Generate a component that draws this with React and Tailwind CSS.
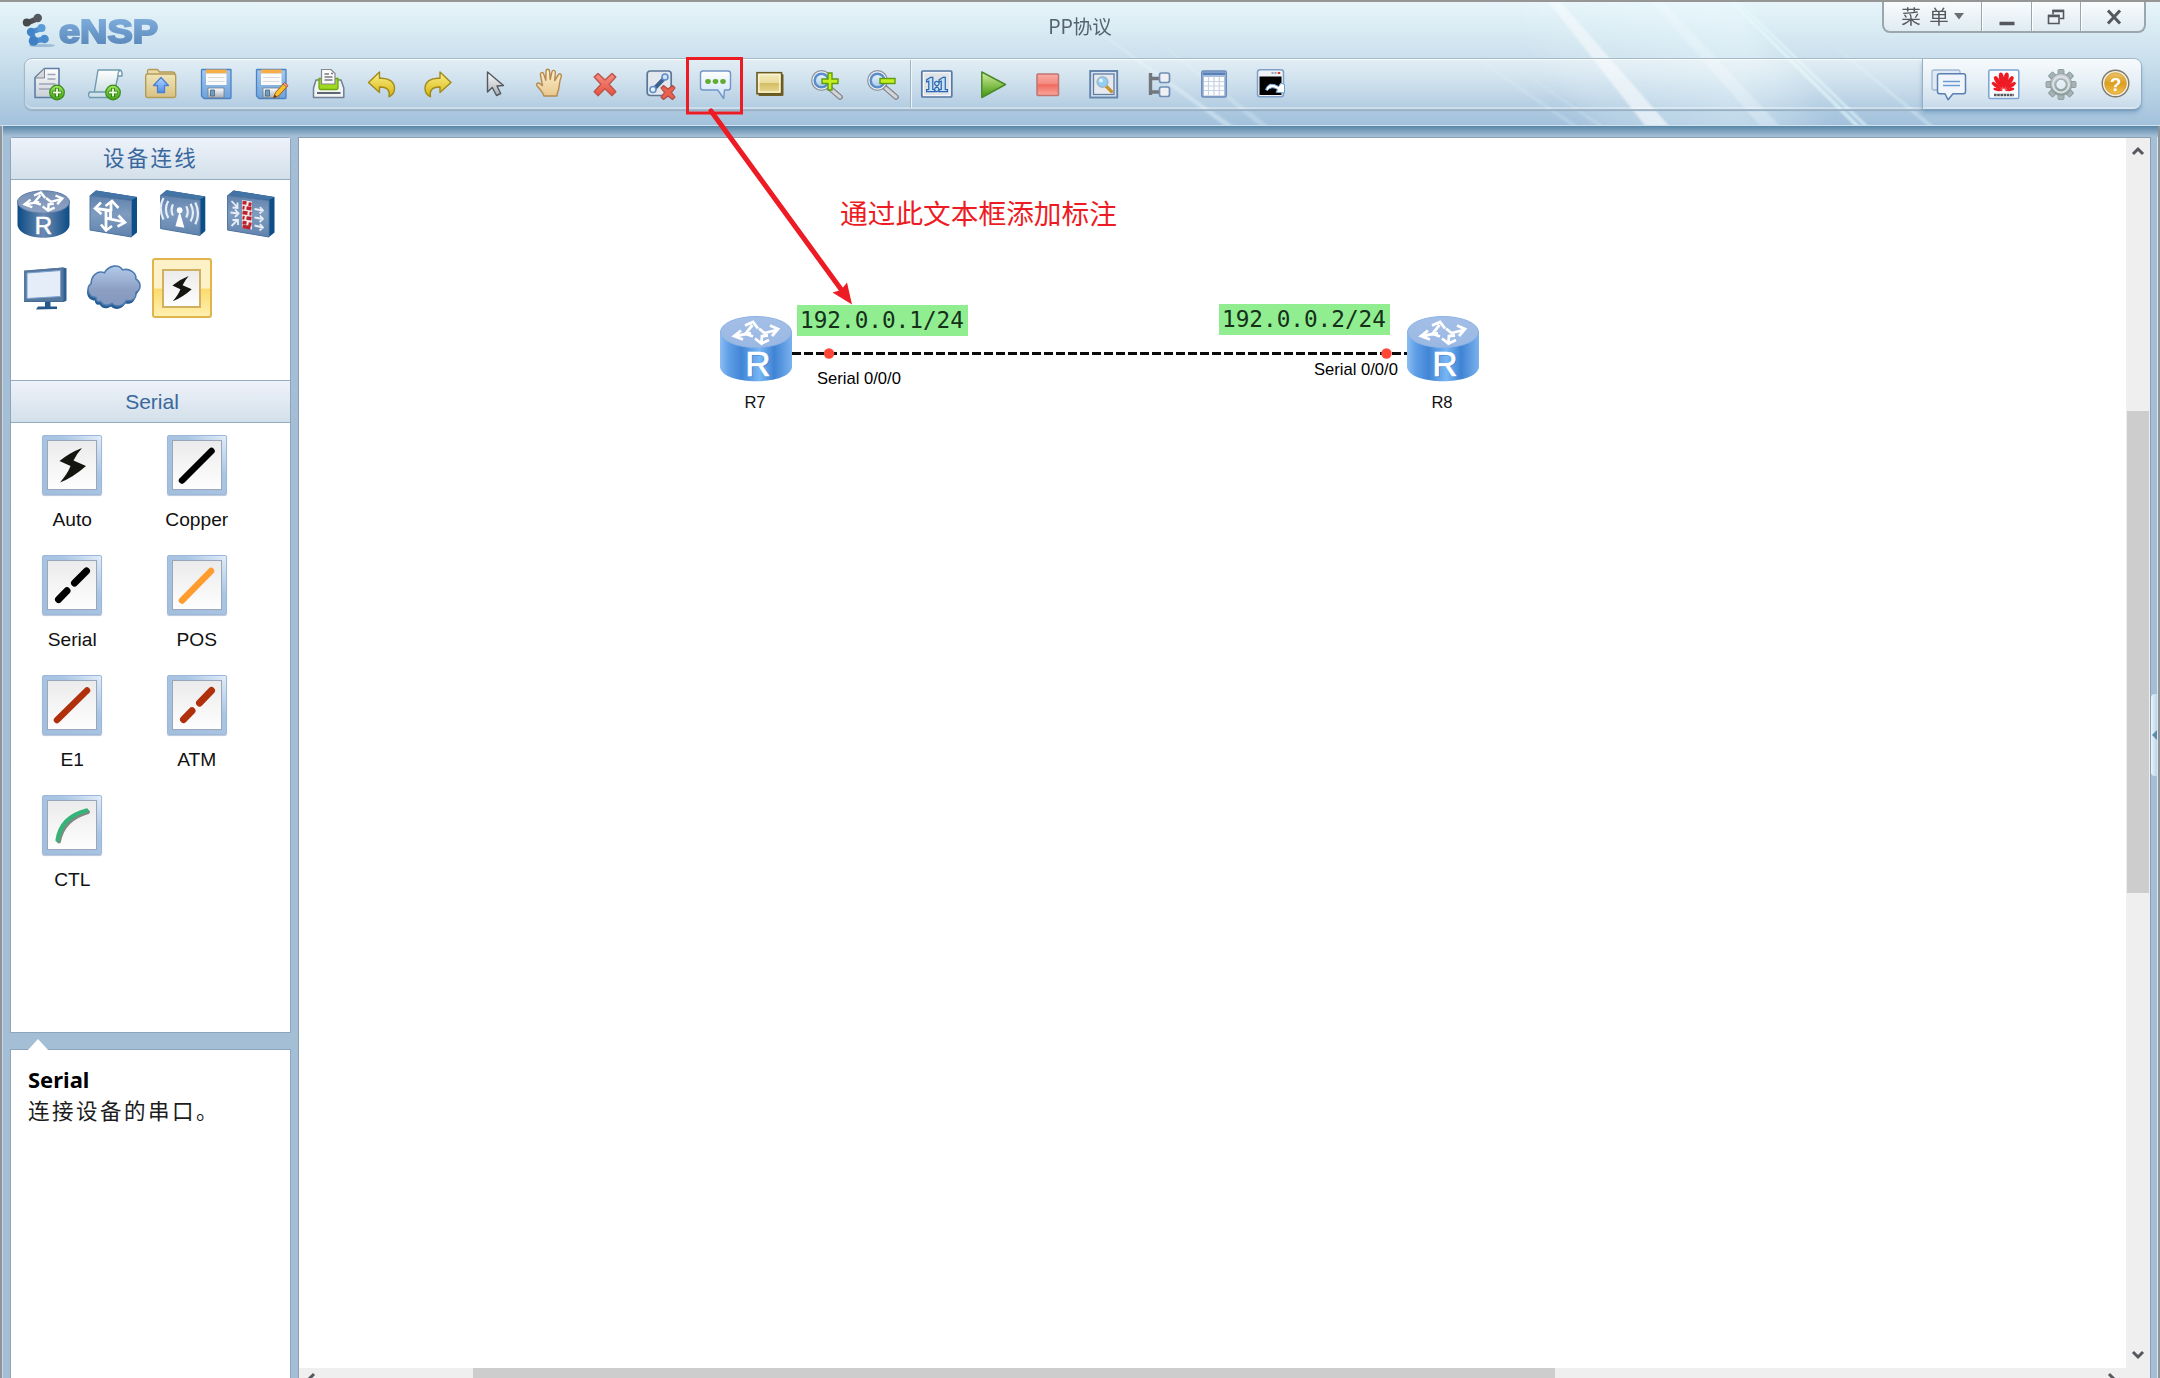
import React from "react";

const SANS = "font-['Liberation_Sans','Noto_Sans_CJK_SC',sans-serif]";
const CJK = "font-['Noto_Sans_CJK_SC',sans-serif]";

function Gradient({ id, stops, horizontal }) {
  return (
    <linearGradient id={id} x1="0" y1="0" x2={horizontal ? 1 : 0} y2={horizontal ? 0 : 1}>
      {stops.map(([o, c], i) => (
        <stop key={i} offset={o} stopColor={c} />
      ))}
    </linearGradient>
  );
}

function Defs() {
  return (
    <svg width="0" height="0" className="absolute">
      <defs>
        <Gradient id="paper" stops={[[0, "#ffffff"], [1, "#c9ced6"]]} />
        <Gradient id="scroll" stops={[[0, "#ffffff"], [1, "#c9dde2"]]} />
        <Gradient id="green" stops={[[0, "#9be860"], [1, "#3fa012"]]} />
        <Gradient id="folder" stops={[[0, "#f0e4b8"], [1, "#d8c282"]]} />
        <Gradient id="blue" stops={[[0, "#b5d8ff"], [1, "#4f8fe8"]]} />
        <Gradient id="floppy" stops={[[0, "#a5c8ec"], [1, "#6fa3da"]]} />
        <Gradient id="metal" stops={[[0, "#ffffff"], [1, "#a8acb4"]]} />
        <Gradient id="yellow" stops={[[0, "#fbf08c"], [1, "#d8b40c"]]} />
        <Gradient id="skin" stops={[[0, "#fff0cf"], [1, "#e8c88e"]]} />
        <Gradient id="red" stops={[[0, "#f59084"], [1, "#e8503e"]]} />
        <Gradient id="bubble" stops={[[0, "#ffffff"], [1, "#c8e0fa"]]} />
        <Gradient id="gold" stops={[[0, "#f4ecc0"], [0.48, "#eadd9c"], [0.5, "#d4bd66"], [1, "#e9da92"]]} />
        <Gradient id="lens" stops={[[0, "#e8f3fb"], [1, "#a9cbea"]]} />
        <Gradient id="play" stops={[[0, "#d4efa0"], [1, "#3f9608"]]} />
        <Gradient id="stop" stops={[[0, "#f9aca4"], [0.45, "#f58a80"], [0.5, "#f16a5e"], [1, "#f9a79c"]]} />
        <Gradient id="help" stops={[[0, "#ecc468"], [0.5, "#dc9e20"], [1, "#f3c04c"]]} />
        <Gradient id="gear" stops={[[0, "#c6ccd0"], [1, "#8c9f9e"]]} />
        <Gradient id="logo" stops={[[0, "#86b4e2"], [1, "#5583b6"]]} />
        <Gradient id="face" stops={[[0, "#5f82ad"], [0.45, "#7f9cc0"], [1, "#5f83ae"]]} />
        <Gradient id="cloud" stops={[[0, "#b4cbea"], [0.6, "#8c9fc3"], [1, "#8499c0"]]} />
        <Gradient id="sideR" horizontal stops={[[0, "#0c4c86"], [0.5, "#6c8ab2"], [1, "#0c4c86"]]} />
        <Gradient id="topR" stops={[[0, "#7890b6"], [1, "#8fa2c2"]]} />
        <Gradient
          id="nodeSide"
          horizontal
          stops={[[0, "#8dbdf2"], [0.12, "#5f9fe6"], [0.3, "#4285d6"], [0.55, "#77b6f4"], [0.75, "#3f83d4"], [1, "#7ab2ee"]]}
        />
        <Gradient id="nodeTop" stops={[[0, "#a3bfe8"], [1, "#9bb8e2"]]} />
        <Gradient id="streak" stops={[[0, "rgba(255,255,255,.4)"], [1, "rgba(255,255,255,.6)"]]} />
      </defs>
    </svg>
  );
}

function Plus({ x, y }) {
  return (
    <g>
      <circle cx={x} cy={y} r="7.3" fill="url(#green)" stroke="#3c8a1c" strokeWidth="1.2" />
      <path d={`M${x - 4.5} ${y}h9M${x} ${y - 4.5}v9`} stroke="#2c6b10" strokeWidth="3.4" />
      <path d={`M${x - 4} ${y}h8M${x} ${y - 4}v8`} stroke="#e8ffd8" strokeWidth="1.8" />
    </g>
  );
}

function Floppy() {
  return (
    <g>
      <path d="M6 5.5h28.500q.5 0 .5.500v27.500q0 1-1 1H8l-2.500-2.500V6z" fill="url(#floppy)" stroke="#4a82c4" strokeWidth="1.300" />
      <path d="M10 5.500h20.500v4H10z" fill="#f9ad45" />
      <path d="M10 9.500h20.500v11.500H10z" fill="#fbfbfb" />
      <path d="M12 13.500h16.500M12 17.500h16.500" stroke="#d9dadc" />
      <path d="M12 24h16v9.800H12z" fill="url(#metal)" stroke="#6d7f94" strokeWidth=".8" />
      <path d="M14.500 26h4v6h-4z" fill="#6f9fc4" stroke="#4d6276" strokeWidth=".8" />
    </g>
  );
}

function UndoShape() {
  return (
    <path
      d="M6.500 18.500L17.500 8v6.300c9.500-.8 15 3.700 15 10.200 0 3.500-1.800 6.500-5.500 8.300 1.200-4.800-.5-10-9.500-9.800v5.500z"
      fill="url(#yellow)"
      stroke="#a08a1c"
      strokeWidth="1.400"
      strokeLinejoin="round"
    />
  );
}

function Lens() {
  return (
    <g>
      <path d="M23 23.500L34 33" stroke="#7b7e83" strokeWidth="5.600" strokeLinecap="round" />
      <path d="M24 24.500L34 33" stroke="#d4d5d8" strokeWidth="3.200" strokeLinecap="round" />
      <circle cx="15.500" cy="16.500" r="9.800" fill="#f4f6f8" stroke="#8f969e" strokeWidth="1.300" />
      <circle cx="15.500" cy="16.500" r="6.800" fill="url(#lens)" stroke="#5b8ccc" strokeWidth="2.600" />
    </g>
  );
}

const TOOLS = [
  <g key="new">
    <path d="M6 13.500L15.500 4.500H30v29H6z" fill="url(#paper)" stroke="#5b7ea6" strokeWidth="1.600" strokeLinejoin="round" />
    <path d="M6 14L15.500 4.500V14z" fill="#d6d8dc" stroke="#7e8692" strokeWidth="1" />
    <path d="M18.500 10.500h8M18.500 15h8M10 20h16.500M10 25h12" stroke="#9aa5b5" strokeWidth="1.500" />
    <Plus x={28} y={28.500} />
  </g>,
  <g key="scroll">
    <path d="M13 6h22q2.500 1 2 6h-4l-4 18H9z" fill="url(#scroll)" stroke="#6e9aae" strokeWidth="1.400" strokeLinejoin="round" />
    <path d="M9 28H4.500q-2 2.500 0 5.500H24l2-5.500z" fill="#cfe2ea" stroke="#6e9aae" strokeWidth="1.300" strokeLinejoin="round" />
    <path d="M33 12q-.5-4 2-6" fill="none" stroke="#6e9aae" strokeWidth="1.200" />
    <Plus x={28} y={28.500} />
  </g>,
  <g key="open">
    <path d="M7.500 10V7q0-1.500 1.500-1.500h8.500l2 2.500H32q3 0 3 2.500" fill="#e9dba8" stroke="#b49c58" strokeWidth="1.300" />
    <rect x="5.700" y="10" width="30" height="23.500" rx="2" fill="url(#folder)" stroke="#b49c58" strokeWidth="1.400" />
    <path d="M21 13.500l7.500 8h-4v7h-7v-7h-4z" fill="url(#blue)" stroke="#4c80d6" strokeWidth="1.300" strokeLinejoin="round" />
  </g>,
  <Floppy key="save" />,
  <g key="saveas">
    <Floppy />
    <path d="M22.500 34l2-5.500L33 19l3.500 3-8.500 9.500z" fill="#fbc12c" stroke="#9c5c14" strokeWidth="1" strokeLinejoin="round" />
    <path d="M32 20l1.500-1.500 3.500 3L35.500 23z" fill="#f0a080" stroke="#b0503a" strokeWidth=".8" />
    <path d="M22.500 34l1.200-3.200 2.200 1.800z" fill="#5c3410" />
  </g>,
  <g key="print">
    <path d="M9 16h25l2.800 8v9.500H6.500V24z" fill="#f2f3f5" stroke="#6f7f94" strokeWidth="1.500" strokeLinejoin="round" />
    <path d="M12 14.500h19v9q0 2-2 2H14q-2 0-2-2z" fill="#9ed91c" stroke="#6da80e" strokeWidth="1.300" />
    <path d="M14.500 5.500h9.500l4 4v10.500H14.500z" fill="#fafafa" stroke="#84878c" strokeWidth="1.200" />
    <path d="M17.500 10h4.500M17.500 13h8M17.500 16h8M24 9.500h2" stroke="#77797e" strokeWidth="1.500" />
    <path d="M10 29h23.500" stroke="#5f6670" strokeWidth="2" />
  </g>,
  <UndoShape key="undo" />,
  <g key="redo" transform="translate(39.500 0) scale(-1 1)">
    <UndoShape />
  </g>,
  <g key="cursor">
    <path d="M14.500 8v20l4.800-4.500 4.200 8 4.200-2-3.700-7.500 6.500-.5z" fill="url(#metal)" stroke="#55585d" strokeWidth="1.400" strokeLinejoin="round" />
  </g>,
  <g key="hand">
    <path
      d="M15 32c-1-4-4-6.500-6.500-9.500-2.500-2.500.5-4.500 2.700-2.700l2.300 1.800L11.500 11c-.5-2.800 2.500-3.400 3.300-.8l2 6L17 7.500c0-3 3.400-3 3.600 0l.6 8 1.700-7.300c.6-2.700 3.600-2.200 3.400.5L25.700 16.500l3.500-5.500c1.400-2.300 4-.7 3 1.700-2 5-1.700 8.500-2.500 12.300-.5 2.500-1.700 4-1.700 7z"
      fill="url(#skin)"
      stroke="#b48a50"
      strokeWidth="1.400"
      strokeLinejoin="round"
    />
  </g>,
  <path
    key="delete"
    d="M14 9.500l7 6.500 7-6.500 3.800 3.600-6.700 7.200 6.700 7.400-3.800 3.900-7-6.900-7 6.900-3.800-3.900 6.700-7.400-6.700-7.200z"
    fill="url(#red)"
    stroke="#c0564c"
    strokeWidth="1.500"
    strokeLinejoin="round"
  />,
  <g key="unlink">
    <rect x="7.200" y="7" width="24" height="24.500" rx="3" fill="#e3e8ef" stroke="#5c7698" strokeWidth="1.700" />
    <path d="M14 25L25.500 13" stroke="#3f618e" strokeWidth="4" />
    <circle cx="13" cy="25.500" r="3" fill="#e9f3fd" stroke="#5f8fc6" strokeWidth="1.600" />
    <circle cx="25" cy="13" r="3" fill="#cfe3f7" stroke="#5f8fc6" strokeWidth="1.600" />
    <path d="M23.500 21.500l4.500 3.500 4.500-3.500 2.500 2.500-3.500 4.500 3.500 4.500-2.500 2.500-4.500-3.500-4.500 3.500L21 33l3.500-4.500L21 24z" fill="#e8604e" stroke="#b04a44" strokeWidth="1.200" strokeLinejoin="round" />
  </g>,
  <g key="text">
    <path d="M8 7h25q2.500 0 2.500 2.500v14q0 2.500-2.500 2.500h-3.500l-.8 8.500-6-8.500H8q-2.500 0-2.500-2.500v-14Q5.500 7 8 7z" fill="url(#bubble)" stroke="#7394c4" strokeWidth="1.400" strokeLinejoin="round" />
    <ellipse cx="13" cy="17.500" rx="2.800" ry="2.400" fill="#62aa32" />
    <ellipse cx="20.500" cy="17.500" rx="2.800" ry="2.400" fill="#62aa32" />
    <ellipse cx="28" cy="17.500" rx="2.800" ry="2.400" fill="#62aa32" />
  </g>,
  <g key="rect">
    <rect x="7.500" y="10" width="25" height="22" rx="1" fill="#6f5f26" />
    <rect x="6" y="8.700" width="24.500" height="21" fill="url(#gold)" stroke="#6b5a20" strokeWidth="1.600" />
    <rect x="7.800" y="10.500" width="21" height="17.500" fill="none" stroke="#fbf5d8" strokeWidth="1.400" />
  </g>,
  <g key="zoomin">
    <Lens />
    <path d="M22 9h4v6h6v4.500h-6V26h-4v-6.500h-6V15h6z" fill="#c4ee1c" stroke="#5d9c10" strokeWidth="1.400" />
  </g>,
  <g key="zoomout">
    <Lens />
    <rect x="18" y="14.500" width="15" height="5" fill="#c4ee1c" stroke="#5d9c10" strokeWidth="1.400" />
  </g>,
  <g key="actual">
    <rect x="4.800" y="7" width="30" height="26" rx="1" fill="#dfe2e6" stroke="#5779a5" strokeWidth="1.700" />
    <rect x="6.500" y="8.800" width="26.500" height="22.500" fill="none" stroke="#f8fafc" />
    <text x="19.800" y="26.500" textAnchor="middle" fontFamily="Liberation Serif" fontWeight="700" fontSize="19" fill="#c4e2fb" stroke="#2f68b0" strokeWidth="2.600" paintOrder="stroke" textLength="22">
      1:1
    </text>
  </g>,
  <path key="play" d="M8.800 8L32.500 20.500 8.800 33.500z" fill="url(#play)" stroke="#4b8a2a" strokeWidth="1.500" strokeLinejoin="round" />,
  <rect key="stop" x="9" y="10" width="21.500" height="21.500" rx="1" fill="url(#stop)" stroke="#c07470" strokeWidth="1.500" />,
  <g key="preview">
    <rect x="6.200" y="7" width="27" height="26.500" fill="#d9e4f0" stroke="#6283ab" strokeWidth="1.900" />
    <rect x="9.500" y="10" width="20.500" height="20.500" fill="#e6eaee" stroke="#5f7ea6" strokeWidth="1.300" />
    <path d="M22 22l5.500 5.500" stroke="#c8922c" strokeWidth="3.200" strokeLinecap="round" />
    <circle cx="18.500" cy="18" r="5.300" fill="#8fd0f4" stroke="#a2b7c9" strokeWidth="1.600" />
    <circle cx="17" cy="16.500" r="2" fill="#dff4ff" />
  </g>,
  <g key="tree">
    <path d="M11.500 9v22M11 14.500h9M11 28h9" fill="none" stroke="#73777d" strokeWidth="3.400" />
    <rect x="20.500" y="9" width="10" height="9.500" rx="2" fill="#eef0f4" stroke="#6f8db5" strokeWidth="1.700" />
    <rect x="20.500" y="23" width="10" height="9.500" rx="2" fill="#eef0f4" stroke="#6f8db5" strokeWidth="1.700" />
  </g>,
  <g key="grid">
    <rect x="6.800" y="7" width="24.500" height="26" rx="1.500" fill="#a9bfdb" stroke="#6b8cba" strokeWidth="1.500" />
    <path d="M8 8.500h22v2.500H8z" fill="#5781bb" />
    <path d="M9 13h20v18.500H9z" fill="#fdfdfd" />
    <path d="M9 17.500h20M9 22h20M9 26.500h20M13.500 13v18.500M19 13v18.500M24.300 13v18.500" stroke="#c8d3e2" strokeWidth="1.200" />
  </g>,
  <g key="cli">
    <rect x="7.500" y="5.800" width="26" height="27" rx="2.500" fill="#eef2f6" stroke="#7e9fc8" strokeWidth="1.500" />
    <path d="M21.500 9h2M24.500 9h2" stroke="#98a2ac" strokeWidth="1.800" />
    <path d="M27.800 9h2.400" stroke="#e03a2e" strokeWidth="2" />
    <path d="M9.500 12.500h22v18.500h-22z" fill="#000" />
    <path d="M15.500 25.500q3.500-9 13-3l2.500-3.500 3.500 1.500v8.500l-8.500-.8 1.500-2.700q-6-4-10 1z" fill="#fff" stroke="#6e9ed0" strokeWidth="1" strokeLinejoin="round" />
  </g>,
];

const TEETH = [0, 45, 90, 135, 180, 225, 270, 315];
const PETALS = [
  [-78, 0.62],
  [-54, 0.85],
  [-32, 1],
  [-10, 1.08],
  [10, 1.08],
  [32, 1],
  [54, 0.85],
  [78, 0.62],
];

const RIGHT_TOOLS = [
  <g key="chat">
    <rect x="3" y="6" width="28" height="20" rx="2" fill="#dfeaf4" stroke="#a0b8d4" strokeWidth="1.300" />
    <path d="M11 11h24q2 0 2 2v17.500q0 2-2 2H24.500l-5 6.500-3-6.500H11q-2 0-2-2V13q0-2 2-2z" transform="translate(-.5 -.5) scale(1 .93)" fill="#f0f5fb" stroke="#5a7fb0" strokeWidth="1.500" strokeLinejoin="round" />
    <path d="M14 17.500h17M14 21.500h17" stroke="#6e9ad2" strokeWidth="1.500" />
  </g>,
  <g key="huawei">
    <rect x="4.800" y="6" width="30" height="28.500" rx="1.500" fill="#fbfcfd" stroke="#78a4d4" strokeWidth="1.500" />
    {PETALS.map(([a, s]) => (
      <path
        key={a}
        d="M0-1.500C-2-7-3.200-12-1.600-16.500q1.600-1.500 3.200 0C3.200-12 2-7 0-1.500z"
        transform={`translate(19.800 27) rotate(${a}) scale(${s})`}
        fill="#ee1a24"
      />
    ))}
    <path d="M10 31h20" stroke="#55585c" strokeWidth="2.400" strokeDasharray="2.600 .6" />
  </g>,
  <g key="gear">
    {TEETH.map((a) => (
      <rect key={a} x="18" y="5.500" width="6" height="8" rx="1" transform={`rotate(${a} 21 20.500)`} fill="#a8b2b5" stroke="#8c9fa1" strokeWidth="1" />
    ))}
    <circle cx="21" cy="20.500" r="8" fill="none" stroke="#91a1a3" strokeWidth="6.500" />
    <circle cx="21" cy="20.500" r="8" fill="none" stroke="url(#gear)" strokeWidth="5" />
    <circle cx="21" cy="20.500" r="8" fill="none" stroke="#dde2e4" strokeWidth="2" />
  </g>,
  <g key="help">
    <circle cx="20.500" cy="19.500" r="13.300" fill="#f3efe4" stroke="#807a6c" strokeWidth="1.400" />
    <circle cx="20.500" cy="19.500" r="10.800" fill="url(#help)" stroke="#d09a2c" strokeWidth=".8" />
    <text x="20.500" y="26.500" textAnchor="middle" fontFamily="Liberation Sans" fontWeight="700" fontSize="19" fill="#fff">
      ?
    </text>
  </g>,
];

function ToolCell({ children }) {
  return (
    <div className="flex w-[55.5px] shrink-0 justify-center">
      <svg width="40" height="40" viewBox="0 0 40 40" className="overflow-visible">
        {children}
      </svg>
    </div>
  );
}

function Logo() {
  return (
    <div className="flex h-[58px] items-start pl-[8px] pt-[11px]">
      <svg width="34" height="36" viewBox="0 0 34 36">
        <ellipse cx="20" cy="33.500" rx="13" ry="1.600" fill="#9dbcd8" />
        <path d="M5 11L16 6.500" stroke="#4e5256" strokeWidth="5.500" />
        <circle cx="4.800" cy="10.500" r="4" fill="#45494c" />
        <circle cx="15.800" cy="6" r="4.200" fill="#55595d" />
        <path d="M20 16.500L9 20l3.500 9L23 27" fill="none" stroke="#4f8fd0" strokeWidth="5.500" strokeLinejoin="round" />
        <circle cx="19.500" cy="16" r="4" fill="#5c9bd8" />
        <circle cx="9" cy="20" r="4.200" fill="#4384c8" />
        <circle cx="11.500" cy="29" r="4.800" fill="#3f80c4" />
        <circle cx="22.500" cy="27" r="4.300" fill="#4c8ccc" />
      </svg>
      <svg width="106" height="36" viewBox="0 0 106 36" className="overflow-visible">
        <text x="3" y="31" fontFamily="Liberation Sans" fontWeight="700" fontSize="34" fill="url(#logo)" stroke="url(#logo)" strokeWidth="2" textLength="99" lengthAdjust="spacingAndGlyphs">
          eNSP
        </text>
      </svg>
    </div>
  );
}

function LightStreaks() {
  return (
    <svg width="2160" height="124" viewBox="0 2 2160 124" className="pointer-events-none absolute left-0 top-0">
      <defs>
        <linearGradient id="glow" x1="0" x2="1" y1="0" y2="0">
          <stop offset="0" stopColor="#eefbff" stopOpacity="0" />
          <stop offset=".7" stopColor="#eefbff" stopOpacity=".4" />
          <stop offset="1" stopColor="#eefbff" stopOpacity="0" />
        </linearGradient>
        <filter id="soft" x="-5%" y="-5%" width="110%" height="110%">
          <feGaussianBlur stdDeviation="1.200" />
        </filter>
        <filter id="softer" x="-5%" y="-10%" width="110%" height="120%">
          <feGaussianBlur stdDeviation="9" />
        </filter>
      </defs>
      <path d="M1500-10H1730L1840 140H1600z" fill="url(#glow)" filter="url(#softer)" />
      <g filter="url(#soft)">
        <path d="M1547 0h12l111 127h-24z" fill="url(#streak)" />
        <path d="M1650 0h12l119 127h-20z" fill="#f4fbff" opacity=".3" />
        <path d="M1728 0h3l130 127h-5zM1735 0h2l132 127h-4z" fill="#e8fdff" opacity=".65" />
        <path d="M1815 30L1935 127h-6z" fill="#e8fdff" opacity=".35" />
        <path d="M1075 15L1235 127h-9z" fill="#eefaff" opacity=".4" />
        <path d="M1150 35L1270 127h-9z" fill="#eefaff" opacity=".25" />
        <path d="M1450 40L1580 127h-7zM1490 50L1605 127h-5z" fill="#eefaff" opacity=".22" />
      </g>
    </svg>
  );
}

function WindowButtons() {
  const sep = "border-l border-[#9aa6ae] shadow-[inset_1px_0_0_#fff]";
  return (
    <div className="flex h-[31px] w-[264px] overflow-hidden rounded-b-lg border-x-2 border-b-2 border-[#9ba6ad] bg-linear-to-b from-[#f8fcfd] to-[#dfebf2] text-[#55595e]">
      <div className={`flex w-[97px] items-center justify-center gap-[3px] pb-[2px] text-[19.5px] leading-none ${CJK}`}>
        <span className="whitespace-pre tracking-[2px]">菜 单</span>
        <svg width="10" height="8" viewBox="0 0 10 8">
          <path d="M0 1h10L5 7.500z" fill="#6b6f74" />
        </svg>
      </div>
      <div className={`flex w-[50px] items-center justify-center ${sep}`}>
        <svg width="16" height="20" viewBox="0 0 16 20">
          <path d="M.5 16.500h15" stroke="#55585e" strokeWidth="3.400" />
        </svg>
      </div>
      <div className={`flex w-[49px] items-center justify-center ${sep}`}>
        <svg width="18" height="16" viewBox="0 0 18 16" fill="none" stroke="#55585e">
          <path d="M6 5.500V1.500h10.500v8H13" strokeWidth="1.600" />
          <path d="M5.500 2h11.500" strokeWidth="2.500" />
          <path d="M1.500 6.500h10.500v8H1.500z" strokeWidth="1.600" />
          <path d="M1 7h11.500" strokeWidth="2.500" />
        </svg>
      </div>
      <div className={`flex flex-1 items-center justify-center ${sep}`}>
        <svg width="16" height="16" viewBox="0 0 16 16" className="ml-[2px]">
          <path d="M2 1.500l12 13M14 1.500l-12 13" stroke="#55585e" strokeWidth="3" />
        </svg>
      </div>
    </div>
  );
}

function Header() {
  return (
    <header className="relative h-[126px] shrink-0 border-t-2 border-[#969696] bg-linear-to-b from-[#e7f5fa] via-[#c8deeb] to-[#a3c1dc]">
      <LightStreaks />
      <div className="relative flex h-[56px] justify-between">
        <div className="-mt-px flex-1 pl-[14px]">
          <Logo />
        </div>
        <div className="flex items-start pt-[11px]">
          <span className={`w-[66px] whitespace-nowrap text-center text-[19.5px] leading-[26px] text-[#55636f] ${CJK}`}>PP协议</span>
        </div>
        <div className="flex flex-1 justify-end pr-[14px]">
          <WindowButtons />
        </div>
      </div>
      <div className="relative ml-[24px] flex h-[52px] w-[2118px] items-center rounded-lg border border-[#a3b8c9] bg-linear-to-b from-white/45 to-white/5 shadow-[inset_0_1px_0_rgba(255,255,255,.8),inset_0_-2px_0_rgba(255,255,255,.35),0_1px_1px_#94adc2]">
        <div className="-ml-[3.5px] flex">
          {TOOLS.slice(0, 16).map((t, i) => (
            <ToolCell key={i}>{t}</ToolCell>
          ))}
        </div>
        <div className="-mr-px h-[48px] w-px bg-[#9fb4c6] shadow-[1px_0_0_#eef5f9]" />
        <div className="flex">
          {TOOLS.slice(16).map((t, i) => (
            <ToolCell key={i}>{t}</ToolCell>
          ))}
        </div>
        <div className="ml-auto flex h-[50px] w-[219px] items-center rounded-r-lg border-l border-[#98afc2] bg-linear-to-b from-white/65 to-white/25 shadow-[0_4px_4px_rgba(90,140,180,.5)]">
          <div className="-ml-[2px] flex">
            {RIGHT_TOOLS.map((t, i) => (
              <ToolCell key={i}>{t}</ToolCell>
            ))}
          </div>
        </div>
      </div>
      <div className="absolute bottom-0 left-0 h-px w-full bg-[#d3e2ec]" />
    </header>
  );
}

function RouterArrows() {
  return (
    <g fill="none" stroke="#fff" strokeWidth="2.800" strokeLinejoin="miter">
      <path d="M31 17.500l-5-.5 6.500-8M25 9.500l8-3.500 5 6.500" />
      <path d="M33 20.500l-7-2.500-11 2M21 14.500l-7 5.500 9 3.500" />
      <path d="M39 12.500l5.500 4.500 12-3M50 9.500l8 3.500-6 7" />
      <path d="M48 19.500l-6 .5-.5 6M35 22.500l6.500 5 7.500-3.500" />
    </g>
  );
}

const DEVICES = [
  {
    name: "router",
    art: (
      <g>
        <path d="M3.500 18v23c2 17 50 17 52 0V18z" fill="url(#sideR)" />
        <ellipse cx="29.500" cy="18" rx="26" ry="11.200" fill="url(#topR)" stroke="#5d7ba6" />
        <g transform="translate(-1.500 3.500) scale(.86 .84)">
          <RouterArrows />
        </g>
        <text x="29.500" y="50" textAnchor="middle" fontFamily="Liberation Sans" fontSize="24" fill="#fff" stroke="#fff" strokeWidth=".6">
          R
        </text>
      </g>
    ),
  },
  {
    name: "switch",
    art: (
      <g>
        <Box />
        <g fill="none" stroke="#fff" strokeWidth="2.800">
          <path d="M12.500 24.500l15 2v8.500l14 3M23 46V27l5-1V18M23 34.500h6" />
          <path d="M18 18.500l-6 6 6.500 5.500M18 40.500l5 6 6-4.500M35.500 31.500l6.500 7-7.500 4M22.500 22l6.500-5 6.500 7" strokeWidth="2.600" />
        </g>
      </g>
    ),
  },
  {
    name: "wireless",
    art: (
      <g transform="translate(2 0) scale(.95 .97)">
        <Box />
        <path d="M27 28l5 17-9.500-1.500z" fill="#fff" />
        <circle cx="27" cy="27" r="3" fill="#fff" />
        <path
          d="M20 21q-3 5.500 0 11.500M15 17.500q-5 8.500 0 17.500M10 14.500q-6 10.500 0 22M34 23q3 5.500 0 11.500M38.500 20.500q5 9.500 0 18M43.500 19q5.500 11.500 0 22.500"
          fill="none"
          stroke="#e6edf6"
          strokeWidth="2.300"
        />
      </g>
    ),
  },
  {
    name: "firewall",
    art: (
      <g transform="translate(-.5 0)">
        <Box />
        <path d="M21.500 16l10 1.500v28l-10-1.500z" fill="#f4e6ea" />
        <path
          d="M22 18.500l4 .5M28 20l3 .5M22 23.500l2 .3M26 24l5 .7M22 28.500l5 .7M29 29.500l2 .3M22 33.500l2 .3M26 34l5 .7M22 38.500l4 .5M28 40l3 .5M22 42.500l8 1.200"
          stroke="#b8242c"
          strokeWidth="3.700"
        />
        <path
          d="M11 17l6 6.500m0-5v5.500l-5-.5M10 28.500l7.500 1m-3-4l3.500 4-3.500 3.500M11 42l6-6m-5 0h5.500v5M34 25l8.500 1.500m-3-3.500l3 3.500-3.500 3M34 33.500l8.500 1.500m-3-3.500l3 3.500-3.500 3M34 41.500l8.500 2m-3-3.500l3 3.500-3.500 3"
          fill="none"
          stroke="#e6edf5"
          strokeWidth="1.800"
        />
      </g>
    ),
  },
  {
    name: "pc",
    art: (
      <g>
        <path d="M10 13l39-3.500 3.500.8v32.500l-3 1.200H10z" fill="#2f5f92" />
        <path d="M10 12.500l39.500-3v34H10z" fill="#56789f" />
        <path d="M13 15l33.500-2.500v26L13 40.500z" fill="#e4edf8" stroke="#7da0cc" strokeWidth="1" />
        <path d="M31 44h5.500v4.500H43v2.500l-21 .5 2-3h7z" fill="#24578c" />
      </g>
    ),
  },
  {
    name: "cloud",
    art: (
      <g>
        <path
          d="M12 43c-8 0-11-10-5-14 0-8 7-14 14-11 5-8 15-9 19-3 7-2 15 3 14 9 6 4 6 11 0 14 1 7-5 9-10 8-3 6-11 7-15 3-5 3-10 2-12-2-3 1-5-1-5-4z"
          fill="#235a90"
          transform="translate(.5 -.5) scale(.95 1)"
        />
        <path
          d="M12 43c-8 0-11-10-5-14 0-8 7-14 14-11 5-8 15-9 19-3 7-2 15 3 14 9 6 4 6 11 0 14 1 7-5 9-10 8-3 6-11 7-15 3-5 3-10 2-12-2-3 1-5-1-5-4z"
          fill="url(#cloud)"
          stroke="#4b7ab0"
          strokeWidth="1.600"
          transform="translate(1.500 -3) scale(.95 .99)"
        />
      </g>
    ),
  },
  { name: "link", selected: true },
];

function Box() {
  return (
    <g>
      <path d="M7 11.500l6-5L54 13v35.500L48.500 53 7 46z" fill="#0c4e88" />
      <path d="M7 11.500l6-5L54 13l-5.500 3z" fill="#4474a6" />
      <path d="M7 11.500l41.500 5V53L7 46z" fill="url(#face)" stroke="#54779f" strokeWidth="1" />
    </g>
  );
}

function Bolt() {
  return (
    <path
      d="M40 13Q28 17.500 17.500 26l11 5Q26 38 18 47.500 31 42.500 44 31l-12.500-5.500Q34.500 19 40 13z"
      fill="#14150f"
    />
  );
}

function SelectedLink() {
  return (
    <div className="flex size-[60px] items-center justify-center rounded-[3px] border-2 border-[#dfb54c] bg-linear-to-b from-[#fdf1c8] from-50% via-[#fcdb6c] via-52% to-[#fff0b0]">
      <div className="size-[39px] border-2 border-[#d2b062] bg-linear-to-b from-[#ececec] to-[#fdfdfd]">
        <svg width="35" height="35" viewBox="6 6 48 48">
          <Bolt />
        </svg>
      </div>
    </div>
  );
}

const LINKS = [
  { label: "Auto", art: <Bolt /> },
  { label: "Copper", art: <path d="M15 45.500L44.500 16" stroke="#000" strokeWidth="6.500" strokeLinecap="round" /> },
  { label: "Serial", art: <path d="M16.500 44.500l8.500-8.800M32.500 28L44.500 16" stroke="#000" strokeWidth="7" strokeLinecap="round" /> },
  { label: "POS", art: <path d="M15 45.500L44 16" stroke="#ff9c2e" strokeWidth="6.500" strokeLinecap="round" /> },
  { label: "E1", art: <path d="M15 45L45 15.500" stroke="#b0300c" strokeWidth="6.500" strokeLinecap="round" /> },
  { label: "ATM", art: <path d="M16.500 44.500l8.500-8.800M32.500 28L44.500 15.500" stroke="#b0300c" strokeWidth="7" strokeLinecap="round" /> },
  {
    label: "CTL",
    art: (
      <g fill="none" strokeLinecap="round">
        <path d="M17 46.500Q21 24 46 17" stroke="#4d5a52" strokeWidth="4" opacity=".7" />
        <path d="M15.500 45Q19 22 44.500 15.500" stroke="#35b478" strokeWidth="4.200" />
      </g>
    ),
  },
];

function LinkTile({ label, art }) {
  return (
    <div className="flex h-[120px] flex-col items-center">
      <div className="size-[60px] rounded-[2px] border border-[#9db8d8] bg-linear-to-bl from-[#e2edf8] via-[#a9c5e4] via-35% to-[#a3bddd] p-[4px] shadow-[0_1px_1px_#b5c5d8]">
        <div className="size-full border border-[#9aa7b8] bg-linear-to-b from-[#ebebeb] to-[#fefefe]">
          <svg width="60" height="60" viewBox="0 0 60 60" className="-ml-[6px] -mt-[6px] max-w-none">
            {art}
          </svg>
        </div>
      </div>
      <span className="mt-[13px] text-[19.2px] leading-[24px] text-[#111]">{label}</span>
    </div>
  );
}

function SectionTitle({ children, className }) {
  return (
    <div className={`flex items-center justify-center border-b border-[#93aabf] bg-linear-to-b from-[#eef2fa] to-[#d3e0ea] text-[#3a689c] ${className}`}>
      {children}
    </div>
  );
}

function Sidebar() {
  return (
    <aside className="flex w-[281px] shrink-0 flex-col">
      <div className="flex h-[896px] flex-col rounded-t-[3px] border border-[#8ba5bf] bg-white">
        <SectionTitle className={`h-[42px] pb-[3px] text-[21.5px] tracking-[2.3px] ${CJK}`}>设备连线</SectionTitle>
        <div className="-ml-[2px] grid h-[200px] grid-cols-[repeat(4,69px)] grid-rows-[67px_82px]">
          {DEVICES.map((d) => (
            <div key={d.name} className="flex items-center justify-center">
              {d.selected ? (
                <SelectedLink />
              ) : (
                <svg width="60" height="60" viewBox="0 0 60 60">
                  {d.art}
                </svg>
              )}
            </div>
          ))}
        </div>
        <SectionTitle className="h-[43px] border-t pl-[3px] text-[21px]">Serial</SectionTitle>
        <div className="-ml-px grid grid-cols-[124.5px_124.5px] pt-[12px]">
          {LINKS.map((l) => (
            <LinkTile key={l.label} {...l} />
          ))}
        </div>
      </div>
      <div className="relative mt-[16px] flex flex-1 flex-col border border-b-0 border-[#8ba5bf] bg-white px-[17px] pt-[16px]">
        <svg width="22" height="12" viewBox="0 0 22 12" className="absolute -top-[11px] left-[16px]">
          <path d="M0 12L11 0l11 12z" fill="#fff" />
        </svg>
        <span className="text-[22px] font-bold leading-[26px] text-black font-['Noto_Sans',sans-serif]">Serial</span>
        <span className={`mt-[3px] whitespace-nowrap text-[21.5px] leading-[30px] tracking-[2.5px] text-[#1c1c1c] ${CJK}`}>连接设备的串口。</span>
      </div>
    </aside>
  );
}

function RouterNode({ name, className }) {
  return (
    <div className={`absolute flex w-[72px] flex-col items-center ${className}`}>
      <svg width="72" height="72" viewBox="0 0 72 72">
        <path d="M0 15v36c2 19 70 19 72 0V15z" fill="url(#nodeSide)" />
        <ellipse cx="36" cy="16" rx="35.500" ry="15.500" fill="url(#nodeTop)" stroke="#8db3e6" />
        <RouterArrows />
        <text x="39.500" y="61" textAnchor="middle" fontFamily="Liberation Sans" fontSize="35" fill="#3d76be" opacity=".6">
          R
        </text>
        <text x="38" y="60" textAnchor="middle" fontFamily="Liberation Sans" fontSize="35" fill="#fff" stroke="#fff" strokeWidth=".7">
          R
        </text>
      </svg>
      <span className="mr-[2px] mt-[5px] text-[16.6px] leading-[20px] text-[#111]">{name}</span>
    </div>
  );
}

function Note({ children, className }) {
  return (
    <div className={`absolute h-[31px] w-[171px] whitespace-nowrap bg-[#90ee90] pl-[3px] text-[22.7px] leading-[30px] text-[#16301a] font-['DejaVu_Sans_Mono',monospace] ${className}`}>
      {children}
    </div>
  );
}

function Chevron({ d, w = 14, h = 10, className = "" }) {
  return (
    <svg width={w} height={h} viewBox={`0 0 ${w} ${h}`} className={className}>
      <path d={d} fill="none" stroke="#55585c" strokeWidth="3" />
    </svg>
  );
}

function Workspace() {
  return (
    <main className="grid min-w-0 flex-1 grid-cols-[1fr_24px] grid-rows-[1fr_10px] border-l border-t border-[#8a9fb2] bg-[#efefef]">
      <div className="relative bg-white">
        <svg width="700" height="20" viewBox="0 0 700 20" className="absolute left-[493px] top-[205px]">
          <path d="M0 10.500h616" stroke="#0a0a0a" strokeWidth="3" strokeDasharray="9 3" />
          <circle cx="37" cy="10.500" r="5.200" fill="#ff4638" />
          <circle cx="594.500" cy="10.500" r="5.200" fill="#ff4638" />
        </svg>
        <RouterNode name="R7" className="left-[421px] top-[178px]" />
        <RouterNode name="R8" className="left-[1108px] top-[178px]" />
        <Note className="left-[498px] top-[167px]">192.0.0.1/24</Note>
        <Note className="left-[920px] top-[166px]">192.0.0.2/24</Note>
        <span className="absolute left-[518px] top-[231px] text-[16.6px] leading-[20px] text-black">Serial 0/0/0</span>
        <span className="absolute left-[1015px] top-[222px] text-[16.6px] leading-[20px] text-black">Serial 0/0/0</span>
        <span className={`absolute left-[541px] top-[54px] whitespace-nowrap text-[27.7px] leading-[40px] text-[#ed1c24] ${CJK}`}>通过此文本框添加标注</span>
      </div>
      <div className="flex flex-col items-center">
        <Chevron d="M2 8l5-5 5 5" className="mt-[8px]" />
        <div className="mt-[255px] h-[482px] w-[22px] bg-[#cdcdcd]" />
        <Chevron d="M2 2l5 5 5-5" className="-mb-[1px] mt-auto -translate-y-[9px]" />
      </div>
      <div className="flex items-start overflow-hidden">
        <Chevron d="M11 6L5 12" className="ml-[4px]" />
        <div className="ml-[156px] h-[10px] w-[1082px] bg-[#cdcdcd]" />
        <Chevron d="M3 6l6 6" className="ml-auto mr-[6px]" />
      </div>
      <div />
    </main>
  );
}

function Annotation() {
  return (
    <svg width="180" height="260" viewBox="0 0 180 260" className="pointer-events-none absolute left-[680px] top-[50px]">
      <rect x="7.500" y="8.500" width="54" height="54.500" fill="none" stroke="#ed1c24" strokeWidth="3" />
      <path d="M31 61L163 242" stroke="#ed1c24" strokeWidth="5" strokeLinecap="round" />
      <path d="M172 254.500L152.500 242.500l8.500-2.500 6-7.500z" fill="#ed1c24" />
    </svg>
  );
}

export default function App() {
  return (
    <div className={`relative flex h-[1378px] w-[2160px] flex-col overflow-hidden bg-[#a3bfd6] ${SANS}`}>
      <Defs />
      <Header />
      <div className="flex min-h-0 flex-1 border-l-2 border-r-2 border-[#8f9499] bg-linear-to-b from-[#5786a7] to-[#a3bed5] to-[10px] pl-[8px] pt-[11px] shadow-[inset_1px_0_0_#c9d8e4]">
        <Sidebar />
        <div className="w-[7px] shrink-0" />
        <Workspace />
        <div className="flex w-[8px] shrink-0 flex-col border-l border-r border-l-[#8a9fb2] border-r-[#dbe6ee] pt-[557px]">
          <div className="flex h-[82px] w-[6px] items-center justify-end rounded-l-sm bg-linear-to-r from-[#eaf5fb] to-[#bdd5e6]">
            <svg width="5" height="10" viewBox="0 0 5 10">
              <path d="M5 0v10L0 5z" fill="#5c8bab" />
            </svg>
          </div>
        </div>
      </div>
      <Annotation />
    </div>
  );
}
